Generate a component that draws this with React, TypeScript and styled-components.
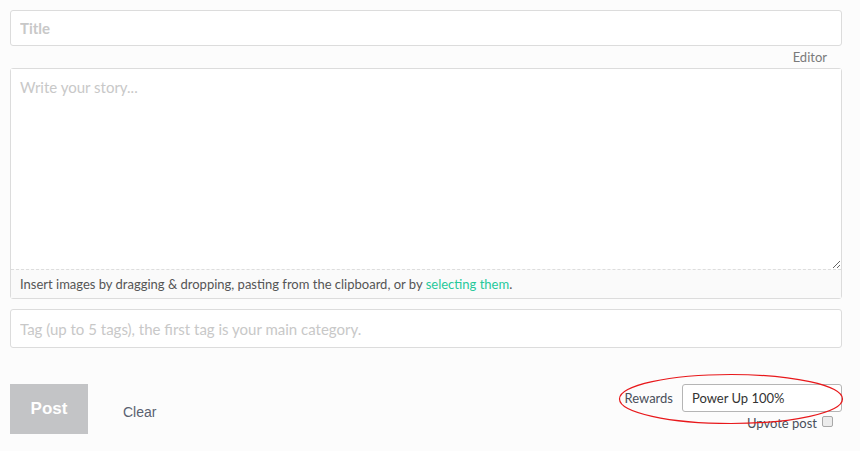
import styled, { createGlobalStyle } from "styled-components";

const GlobalStyle = createGlobalStyle`
  html, body {
    margin: 0;
    padding: 0;
    background: #fcfcfc;
  }
  body {
    font-family: Lato, "Open Sans", sans-serif;
  }
`;

export default function App() {
  return (
    <>
      <GlobalStyle />
      <Page>
        <TitleInput placeholder="Title" />
        <EditorToggle>
          <ToggleLink>Editor</ToggleLink>
        </EditorToggle>
        <EditorBox>
          <StoryArea placeholder="Write your story..." />
          <DropHint>
            Insert images by dragging &amp; dropping, pasting from the clipboard, or by{" "}
            <HintLink>selecting them</HintLink>.
          </DropHint>
        </EditorBox>
        <TagInput placeholder="Tag (up to 5 tags), the first tag is your main category." />
        <BottomRow>
          <Actions>
            <PostButton disabled>Post</PostButton>
            <ClearButton>Clear</ClearButton>
          </Actions>
          <Options>
            <RewardsRow>
              <Label>Rewards</Label>
              <RewardsSelect defaultValue="100">
                <option value="100">Power Up 100%</option>
                <option value="50">Default (50% / 50%)</option>
                <option value="0">Decline Payout</option>
              </RewardsSelect>
              <Highlight viewBox="0 0 226 52">
                <ellipse cx="113" cy="26" rx="111.5" ry="24.5" fill="none" stroke="#e8181b" strokeWidth="1.2" />
              </Highlight>
            </RewardsRow>
            <UpvoteRow>
              <Label>Upvote post</Label>
              <Check type="checkbox" />
            </UpvoteRow>
          </Options>
        </BottomRow>
      </Page>
    </>
  );
}

const Page = styled.div`
  display: flex;
  flex-direction: column;
  width: 832px;
  padding: 10px 0 0 10px;
`;

const fieldBase = `
  box-sizing: border-box;
  width: 100%;
  border: 1px solid #dcdcdc;
  border-radius: 3px;
  background: #fff;
  font-family: Lato, "Open Sans", sans-serif;
  outline: none;
  &::placeholder {
    color: #c8c8c8;
  }
`;

const TitleInput = styled.input`
  ${fieldBase}
  height: 36px;
  padding: 0 9px;
  font-size: 15px;
  font-weight: 700;
  &::placeholder {
    font-weight: 700;
  }
`;

const EditorToggle = styled.div`
  display: flex;
  justify-content: flex-end;
  height: 22px;
  padding-right: 15px;
  align-items: center;
`;

const ToggleLink = styled.span`
  font-size: 13px;
  color: #7a7a7a;
  cursor: pointer;
`;

const EditorBox = styled.div`
  box-sizing: border-box;
  display: flex;
  flex-direction: column;
  border: 1px solid #dcdcdc;
  border-radius: 3px;
  background: #fff;
`;

const StoryArea = styled.textarea`
  box-sizing: border-box;
  display: block;
  width: 100%;
  height: 200px;
  border: none;
  outline: none;
  resize: vertical;
  padding: 9px 9px;
  font-family: Lato, "Open Sans", sans-serif;
  font-size: 15px;
  background: #fff;
  &::placeholder {
    color: #c8c8c8;
  }
`;

const DropHint = styled.div`
  height: 28px;
  line-height: 28px;
  padding: 0 9px;
  border-top: 1px dashed #dddddd;
  background: #fafafa;
  font-size: 13px;
  color: #555;
  white-space: nowrap;
`;

const HintLink = styled.span`
  color: #26c99a;
  cursor: pointer;
`;

const TagInput = styled.input`
  ${fieldBase}
  margin-top: 10px;
  height: 39px;
  padding: 0 9px;
  font-size: 15px;
`;

const BottomRow = styled.div`
  display: flex;
  justify-content: space-between;
  align-items: flex-start;
  margin-top: 36px;
`;

const Actions = styled.div`
  display: flex;
  align-items: center;
`;

const PostButton = styled.button`
  width: 78px;
  height: 50px;
  border: none;
  background: #c3c4c6;
  color: #fff;
  font-family: "Liberation Sans", Arial, sans-serif;
  font-size: 17px;
  font-weight: 700;
  padding: 0;
`;

const ClearButton = styled.button`
  border: none;
  background: none;
  margin-left: 35px;
  margin-top: 5px;
  padding: 0;
  font-family: "Liberation Sans", Arial, sans-serif;
  font-size: 14px;
  color: #5a6170;
`;

const Options = styled.div`
  display: flex;
  flex-direction: column;
  align-items: flex-end;
`;

const RewardsRow = styled.div`
  position: relative;
  display: flex;
  align-items: center;
  gap: 9px;
`;

const Label = styled.span`
  font-size: 13px;
  color: #4a4f5a;
`;

const RewardsSelect = styled.select`
  box-sizing: border-box;
  width: 160px;
  height: 28px;
  border: 1px solid #b5b5b5;
  border-radius: 3px;
  background: #fff;
  padding: 0 9px;
  font-family: Lato, "Open Sans", sans-serif;
  font-size: 13px;
  color: #333;
  appearance: none;
  outline: none;
`;

const Highlight = styled.svg`
  position: absolute;
  left: -6px;
  top: -11px;
  width: 226px;
  height: 52px;
  pointer-events: none;
  overflow: visible;
`;

const UpvoteRow = styled.div`
  display: flex;
  align-items: center;
  gap: 5px;
  margin-top: 3px;
  margin-right: 9px;
`;

const Check = styled.input`
  appearance: none;
  width: 11px;
  height: 11px;
  margin: 0 0 4px;
  border: 1px solid #a8a8a8;
  border-radius: 2px;
  background: #ececec;
`;
